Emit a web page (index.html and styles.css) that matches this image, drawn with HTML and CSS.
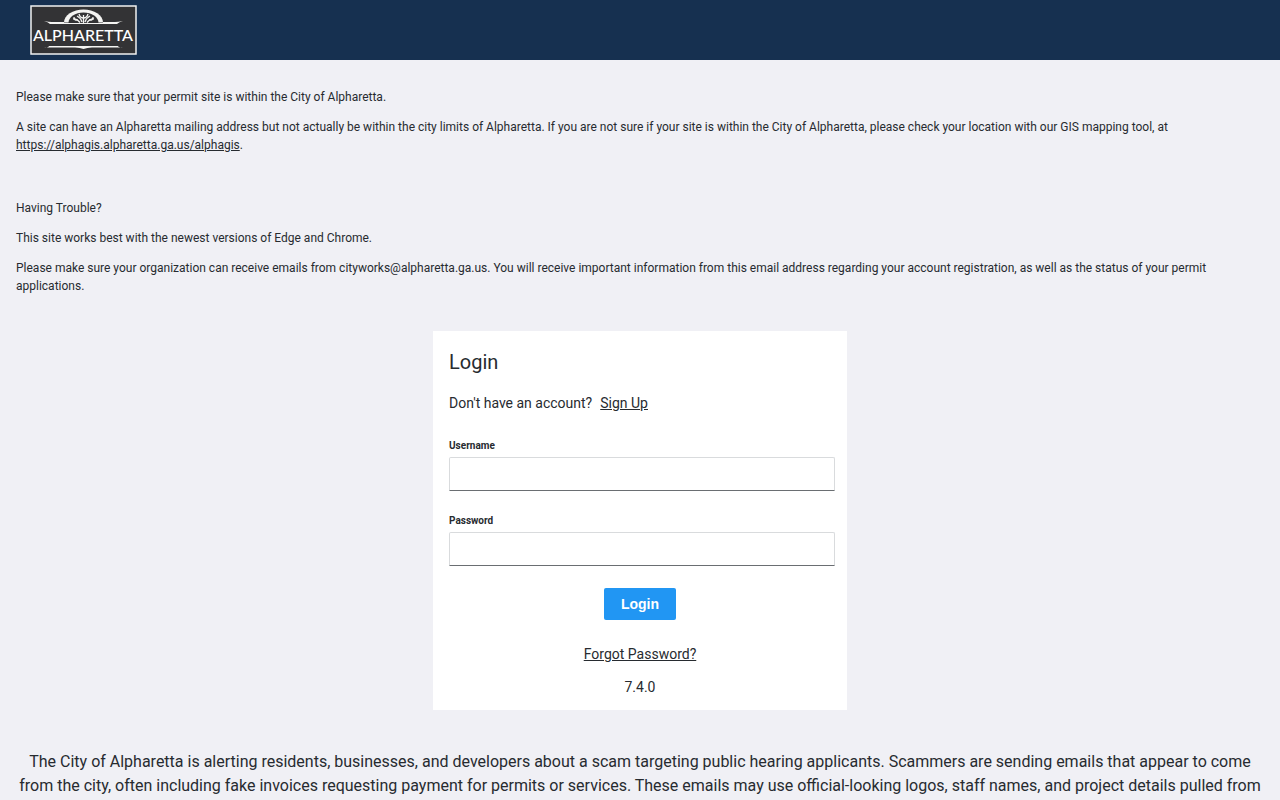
FILE: index.html
```html
<!DOCTYPE html>
<html lang="en">
<head>
<meta charset="utf-8">
<meta name="viewport" content="width=device-width, initial-scale=1">
<title>Alpharetta Permits - Login</title>
<link rel="stylesheet" href="styles.css">
</head>
<body>
<header class="topbar">
  <svg class="logo" width="107" height="50" viewBox="0 0 107 50" role="img" aria-label="Alpharetta">
    <rect x="1" y="1" width="105" height="48" fill="#333335" stroke="#f1f1ef" stroke-width="1.5"/>
    <path d="M34 17.5a19.5 13 0 0 1 39 0z" fill="#f4f4f2"/>
    <path d="M38.500 18a15 10.500 0 0 1 30 0z" fill="#333335"/>
    <g fill="none" stroke="#f4f4f2" stroke-width="1.300">
      <path d="M53.500 18v-8M52 17q-1-4-5-6M55 17q1-4 5-6M50 17.500q-3-4-7-3.500M57 17.500q3-4 7-3.500"/>
      <path d="M49 9q1 4 4.500 4t4.500-4M44 12q0 4 4 3M63 12q0 4-4 3"/>
    </g>
    <path d="M14 16q5 1 8 1h12v2H20q-2-2-6-3zM93 16q-5 1-8 1H73v2h14q2-2 6-3z" fill="#f4f4f2"/>
    <path d="M33 18.500h41" stroke="#f4f4f2"/>
    <path d="M14 43q4 0 5-2h69q1 2 5 2l-5-.5H62q-5 0-8.500 1.500Q50 42.500 45 42.500H19z" fill="#f4f4f2"/>
    <text class="logo-text" x="53" y="36" text-anchor="middle">ALPHARETTA</text>
  </svg>
</header>
<main>
  <section class="notice">
    <p>Please make sure that your permit site is within the City of Alpharetta.</p>
    <p>A site can have an Alpharetta mailing address but not actually be within the city limits of Alpharetta. If you are not sure if your site is within the City of Alpharetta, please check your location with our GIS mapping tool, at <a href="https://alphagis.alpharetta.ga.us/alphagis">https://alphagis.alpharetta.ga.us/alphagis</a>.</p>
    <p class="lead">Having Trouble?</p>
    <p>This site works best with the newest versions of Edge and Chrome.</p>
    <p>Please make sure your organization can receive emails from cityworks@alpharetta.ga.us. You will receive important information from this email address regarding your account registration, as well as the status of your permit applications.</p>
  </section>
  <form class="card">
    <h1 class="title">Login</h1>
    <p class="signup">Don't have an account? <a href="#signup">Sign Up</a></p>
    <div class="fields">
      <div class="field">
        <label for="username">Username</label>
        <input id="username" type="text" autocomplete="username">
      </div>
      <div class="field">
        <label for="password">Password</label>
        <input id="password" type="password" autocomplete="current-password">
      </div>
    </div>
    <button class="submit" type="submit">Login</button>
    <a class="forgot" href="#forgot">Forgot Password?</a>
    <p class="version">7.4.0</p>
  </form>
  <p class="alert">The City of Alpharetta is alerting residents, businesses, and developers about a scam targeting public hearing applicants. Scammers are sending emails that appear to come from the city, often including fake invoices requesting payment for permits or services. These emails may use official-looking logos, staff names, and project details pulled from</p>
</main>
</body>
</html>
```
FILE: styles.css
```css
* {
  box-sizing: border-box;
}

body {
  margin: 0;
  background: #f0f0f5;
  color: #272b30;
  font: 14px/21px Roboto, sans-serif;
}

p, h1 {
  margin: 0;
}

a {
  color: inherit;
  text-decoration: underline;
}

.topbar {
  display: flex;
  align-items: center;
  height: 60px;
  padding: 0 30px;
  background: #163050;
}

.logo-text {
  font: 500 16px Lato, sans-serif;
  fill: #ffffff;
}

.notice {
  display: flex;
  flex-direction: column;
  gap: 12px;
  padding: 28px 16px 36px;
  font-size: 12px;
  line-height: 18px;
}

.lead {
  margin-top: 33px;
}

.card {
  display: flex;
  flex-direction: column;
  width: 100%;
  max-width: 414px;
  margin: 0 auto;
  padding: 16px 12px 12px 16px;
  background: #ffffff;
}

.title {
  font-size: 20px;
  font-weight: 400;
  line-height: 30px;
}

.signup {
  display: flex;
  gap: 8px;
  margin-top: 16px;
}

.fields {
  display: flex;
  flex-direction: column;
  gap: 22px;
  margin-top: 24px;
}

.field {
  display: flex;
  flex-direction: column;
  gap: 4px;
}

.field label {
  font-size: 10px;
  font-weight: 700;
  line-height: 15px;
}

.field input {
  width: 100%;
  height: 34px;
  padding: 0 8px;
  border: 1px solid #d9dbdd;
  border-bottom-color: #6a6e72;
  border-radius: 2px 2px 0 0;
  background: #ffffff;
  font: inherit;
}

.submit {
  align-self: center;
  height: 32px;
  margin: 22px 4px 0 0;
  padding: 0 17px;
  border: 0;
  border-radius: 2px;
  background: #2196f3;
  color: #ffffff;
  font: 700 14px/21px "Liberation Sans", Arial, sans-serif;
}

.forgot {
  align-self: center;
  margin: 24px 4px 0 0;
}

.version {
  margin: 12px 4px 0 0;
  text-align: center;
}

.alert {
  padding: 40px 16px 3px;
  font-size: 16px;
  line-height: 24px;
  text-align: center;
}
```
